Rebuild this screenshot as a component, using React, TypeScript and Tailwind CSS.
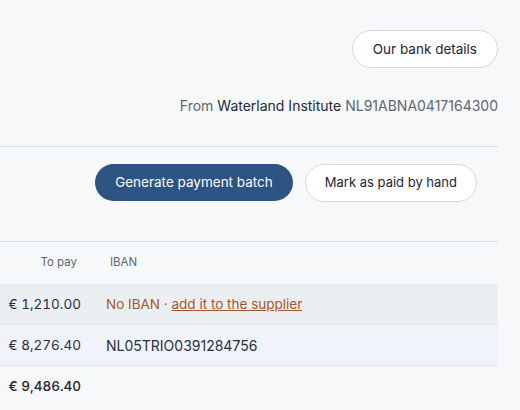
import React from 'react'

const rows = [
	{ amount: '€ 1,210.00', iban: null, bg: 'bg-[#eceff2]' },
	{ amount: '€ 8,276.40', iban: 'NL05TRIO0391284756', bg: 'bg-[#f0f3fa]' },
]

export default function App() {
	return (
		<div className="w-[520px] h-[410px] overflow-hidden bg-[#f6f8fa] text-[#2a313c] font-['Inter',sans-serif] text-[14px]">
			<div className="pr-[22px]">
				{/* header */}
				<div className="flex flex-col items-end pt-[30px]">
					<button className="h-[38px] px-[20px] rounded-full bg-white border border-[#d3d9e2] text-[13.5px] text-[#1f2630]">
						Our bank details
					</button>
					<div className="mt-[27px] text-[14px] text-[#5f6672]">
						From <span className="text-[#222a35]">Waterland Institute</span> NL91ABNA0417164300
					</div>
				</div>
				<div className="mt-[30px] border-t border-[#d5dce6]" />

				{/* actions */}
				<div className="flex justify-end gap-3 pt-[17px] pr-[21px]">
					<button className="h-[37px] px-[20px] rounded-full bg-[#2d5483] text-white text-[13.5px]">
						Generate payment batch
					</button>
					<button className="h-[38px] px-[19px] rounded-full bg-white border border-[#d3d9e2] text-[13px] text-[#1f2630]">
						Mark as paid by hand
					</button>
				</div>

				{/* table */}
				<div className="mt-[39px] border-t border-[#d5dce6]">
					<div className="flex h-[42px] items-center text-[11.5px] text-[#5f6672]">
						<div className="w-[93px] pr-4 text-right">To pay</div>
						<div className="pl-[17px]">IBAN</div>
					</div>
					{rows.map(r => (
						<div key={r.amount} className={`flex h-[41px] items-center border-b border-[#e4e9f0] ${r.bg}`}>
							<div className="w-[93px] pr-3 text-right text-[13.5px] tabular-nums">{r.amount}</div>
							<div className="pl-[13px]">
								{r.iban ? (
									r.iban
								) : (
									<span className="text-[#a5552a] text-[13.5px]">
										No IBAN · <a className="underline">add it to the supplier</a>
									</span>
								)}
							</div>
						</div>
					))}
					<div className="flex h-[41px] items-center">
						<div className="w-[93px] pr-3 text-right text-[13.5px] tabular-nums font-medium text-[#1f2630]">€ 9,486.40</div>
					</div>
				</div>
			</div>
		</div>
	)
}
